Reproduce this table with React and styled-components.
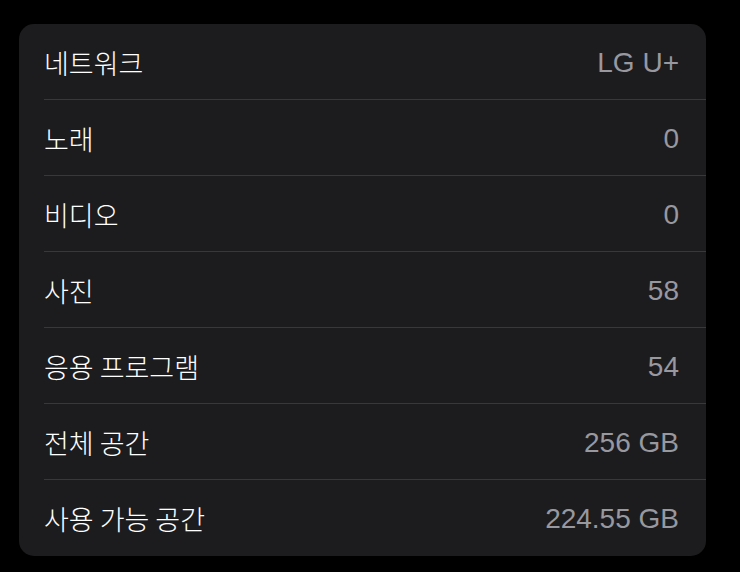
import React from "react";
import styled, { createGlobalStyle } from "styled-components";

const GlobalStyle = createGlobalStyle`
  html, body {
    margin: 0;
    padding: 0;
    background: #000000;
  }
  body {
    font-family: "Liberation Sans", "Noto Sans CJK KR", sans-serif;
  }
`;

const Page = styled.div`
  width: 740px;
  height: 572px;
  padding: 24px 0 0 19px;
  box-sizing: border-box;
`;

const Card = styled.div`
  width: 687px;
  background: #1c1c1e;
  border-radius: 15px;
  overflow: hidden;
`;

const Row = styled.div`
  display: flex;
  align-items: center;
  justify-content: space-between;
  height: 75px;
  margin-left: 25px;
  padding-right: 27px;
  border-bottom: 1px solid ${(p) => (p.$last ? "transparent" : "#38383a")};
  box-sizing: content-box;
`;

const Label = styled.span`
  font-family: "Noto Sans CJK KR", "Liberation Sans", sans-serif;
  font-size: 27px;
  font-weight: 300;
  color: #ffffff;
  letter-spacing: 0;
  margin-top: 1px;
`;

const Value = styled.span`
  font-family: "Liberation Sans", "Noto Sans CJK KR", sans-serif;
  font-size: 28px;
  color: #98989e;
  margin-top: 2px;
`;

const rows = [
  { label: "네트워크", value: "LG U+" },
  { label: "노래", value: "0" },
  { label: "비디오", value: "0" },
  { label: "사진", value: "58" },
  { label: "응용 프로그램", value: "54" },
  { label: "전체 공간", value: "256 GB" },
  { label: "사용 가능 공간", value: "224.55 GB" },
];

export default function App() {
  return (
    <>
      <GlobalStyle />
      <Page>
        <Card>
          {rows.map((row, i) => (
            <Row key={row.label} $last={i === rows.length - 1}>
              <Label>{row.label}</Label>
              <Value>{row.value}</Value>
            </Row>
          ))}
        </Card>
      </Page>
    </>
  );
}
